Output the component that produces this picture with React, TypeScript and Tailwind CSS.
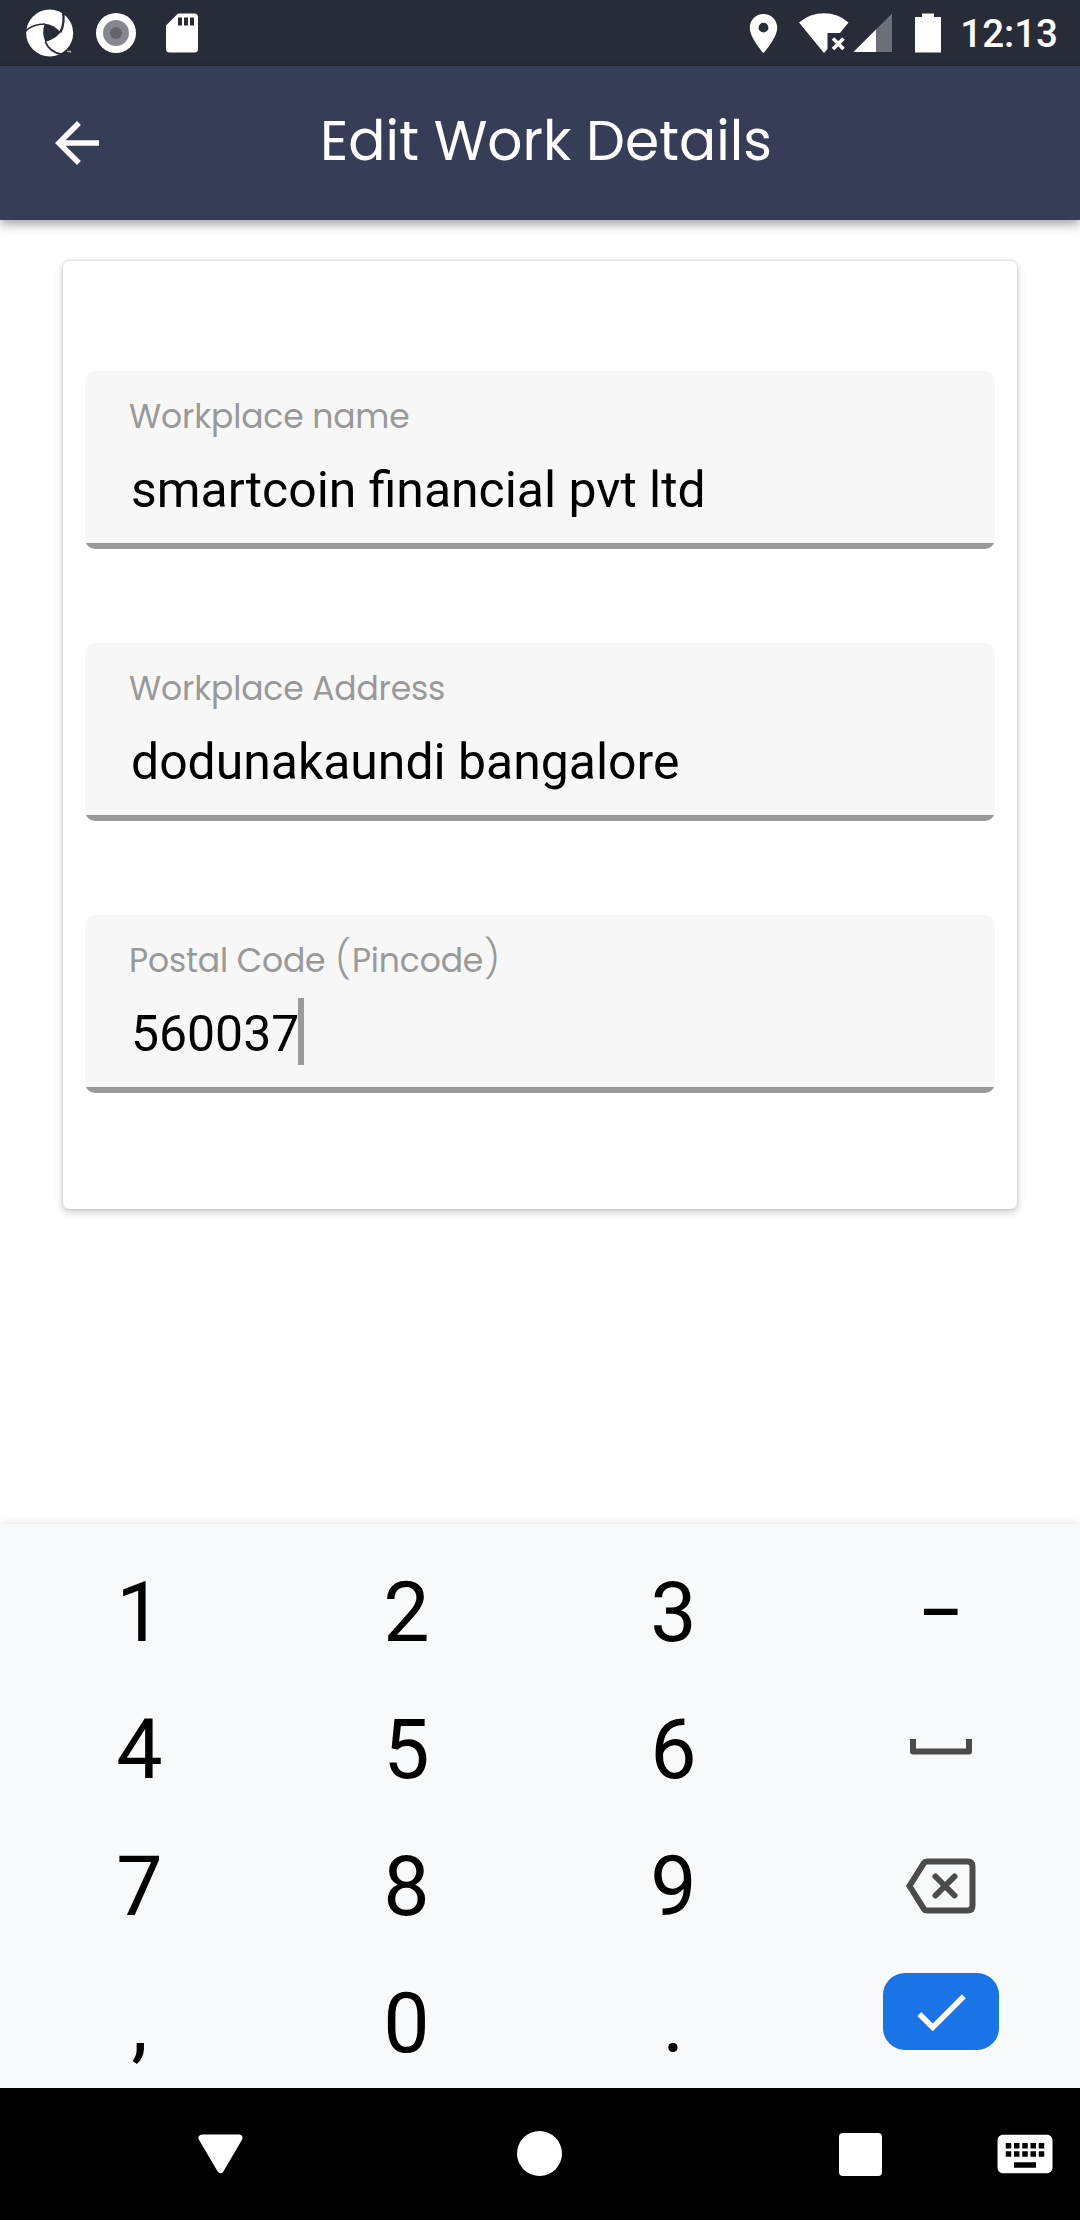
import React from "react";
import { MdArrowBack, MdCheck, MdKeyboard, MdPlace } from "react-icons/md";

const geometric =
  "font-['Poppins','Inter',sans-serif] [font-feature-settings:'cv11']";

function PinwheelIcon() {
  return (
    <svg className="h-12 w-12" viewBox="78 28 144 144" fill="none">
      <circle cx="149" cy="100" r="70.5" fill="#fff" />
      <g stroke="#282c38" fill="none">
        <path d="M76 95Q98 73 135 73" strokeWidth="5" />
        <path d="M181 98Q196 70 188 30" strokeWidth="7" />
        <path d="M136 126Q148 158 186 164" strokeWidth="5" />
      </g>
      <path d="M134 72Q162 74 182 98Q164 120 136 127Q124 99 134 72Z" fill="#282c38" />
      <path d="M172 168Q182 162 190 158L222 150v24h-50z" fill="#282c38" />
      <path d="M201 153h12v6h-3v-3h-2v3h-2v-3h-5z" fill="#b9bbc0" />
    </svg>
  );
}

function TargetIcon() {
  return (
    <svg className="h-10 w-10" viewBox="0 0 40 40">
      <circle cx="20" cy="20" r="20" fill="#fff" />
      <circle cx="20" cy="20" r="13" fill="#85888f" />
      <circle cx="20" cy="20" r="6" fill="#62656d" />
    </svg>
  );
}

function SdCardIcon() {
  return (
    <svg className="h-10 w-8" viewBox="0 0 32 40">
      <path d="M12 .5H28.500a3.500 3.500 0 0 1 3.500 3.500V36a3.500 3.500 0 0 1-3.500 3.500H3.500A3.500 3.500 0 0 1 0 36V12.500Z" fill="#fff" />
      <path d="M12 4.500h4v8h-4zM18 4.500h4v8h-4zM24 4.500h4v8h-4z" fill="#282c38" />
    </svg>
  );
}

function WifiOffIcon() {
  return (
    <svg className="h-10 w-[50px]" viewBox="0 0 50 40">
      <path d="M0 9.500Q11 .3 25 .3T49.500 9.500L41 20H28.500V36L25 40Z" fill="#fff" />
      <path d="M34 25.500L44.500 36M44.500 25.500L34 36" stroke="#fff" strokeWidth="3.600" />
    </svg>
  );
}

function SignalIcon() {
  return (
    <svg className="h-10 w-10" viewBox="0 0 40 40">
      <path d="M.5 39L39 .5V39Z" fill="#6d7079" />
      <path d="M.5 39L23 16.500V39Z" fill="#fff" />
    </svg>
  );
}

function StatusBar() {
  return (
    <header className="flex h-[66px] shrink-0 items-center justify-between bg-[#282c38] pl-[26px] pr-[22px] text-white">
      <div className="flex items-center">
        <PinwheelIcon />
        <div className="ml-[22px]">
          <TargetIcon />
        </div>
        <div className="ml-[30px]">
          <SdCardIcon />
        </div>
      </div>
      <div className="flex items-center">
        <MdPlace className="size-[47px]" />
        <div className="ml-[12px]">
          <WifiOffIcon />
        </div>
        <div className="ml-[4px]">
          <SignalIcon />
        </div>
        <svg className="ml-[22px] h-10 w-[26px]" viewBox="0 0 26 40">
          <path d="M7 .5H19V4H26V39.500H0V4H7Z" fill="#fff" />
        </svg>
        <span className="ml-[19px] mt-[3px] font-['Roboto',sans-serif] text-[38.5px] font-medium leading-none">
          12:13
        </span>
      </div>
    </header>
  );
}

function AppBar() {
  return (
    <div className="relative flex h-[154px] shrink-0 items-center bg-[#363d56] pl-[44px] text-white shadow-[0_4px_10px_rgba(0,0,0,0.38)]">
      <MdArrowBack className="size-[66px]" />
      <h1 className={`${geometric} ml-[210px] -mt-[6px] whitespace-nowrap text-[55px] font-normal leading-none`}>
        Edit Work Details
      </h1>
    </div>
  );
}

function Paren({ children }: { children: string }) {
  return <span className="mx-[1px] text-[38px] font-light leading-[0]">{children}</span>;
}

function Field({ label, value, focused }: { label: React.ReactNode; value: string; focused?: boolean }) {
  return (
    <div className="flex h-[178px] flex-col justify-between overflow-hidden rounded-[10px] bg-[#f7f7f7]">
      <div className="pl-[44px] pt-[28px]">
        <div className={`${geometric} h-[36px] whitespace-nowrap text-[33px] font-normal leading-[36px] tracking-[-0.15px] text-[#999999]`}>
          {label}
        </div>
        <div className="ml-[2px] mt-[19px] flex h-[67px] items-center font-['Roboto',sans-serif] text-[49.9px] text-black">
          <span className="whitespace-nowrap pt-[5px] leading-[62px]">{value}</span>
          {focused && <span className="-ml-px h-[67px] w-[6px] bg-[#9a9a9a]" />}
        </div>
      </div>
      <div className="h-[6px] bg-[#9a9a9a]" />
    </div>
  );
}

function SpaceIcon() {
  return (
    <svg className="h-[18px] w-[62px]" viewBox="0 0 62 18">
      <path d="M3 0V12.500H59V0" fill="none" stroke="#4b4b4b" strokeWidth="6" strokeLinejoin="round" />
    </svg>
  );
}

function BackspaceIcon() {
  return (
    <svg className="mt-[2px] h-[56px] w-[70px]" viewBox="0 0 70 56" fill="none" stroke="#4b4b4b" strokeWidth="6">
      <path d="M21 3.500H61.500Q66.500 3.500 66.500 8.500V47.500Q66.500 52.500 61.500 52.500H21Q19 52.500 18 51L3.500 28L18 5Q19 3.500 21 3.500Z" />
      <path d="M29.500 18.500L48.500 37.500M48.500 18.500L29.500 37.500" strokeLinecap="round" />
    </svg>
  );
}

function EnterKey() {
  return (
    <div className="-mt-[20px] flex h-[77px] w-[116px] items-center justify-center rounded-[22px] bg-[#1b73e8] text-white">
      <MdCheck className="size-[66px]" />
    </div>
  );
}

const keys: React.ReactNode[] = [
  "1", "2", "3", "−",
  "4", "5", "6", <SpaceIcon />,
  "7", "8", "9", <BackspaceIcon />,
  ",", "0", ".", <EnterKey />,
];

function Keypad() {
  return (
    <section className="relative grid h-[564px] shrink-0 grid-cols-4 grid-rows-[repeat(4,137px)] bg-[#f8f9fb] px-[6px] pt-[18px] font-['Roboto',sans-serif] text-[82.5px] leading-none text-black shadow-[0_0_8px_rgba(0,0,0,0.12)]">
      {keys.map((key, i) => (
        <div key={i} className="flex items-center justify-center">
          {typeof key === "string" ? <span className="pt-[5px]">{key}</span> : key}
        </div>
      ))}
    </section>
  );
}

function NavBar() {
  return (
    <nav className="relative flex h-[132px] shrink-0 items-center bg-black text-white">
      <svg className="ml-[198px] h-[40px] w-[45px]" viewBox="0 0 45 40">
        <path d="M4 4H41L22.500 35.500Z" fill="#fff" stroke="#fff" strokeWidth="7" strokeLinejoin="round" />
      </svg>
      <div className="-mt-px ml-[274px] size-[45px] rounded-full bg-white" />
      <div className="ml-[277px] size-[43px] rounded-[4px] bg-white" />
      <MdKeyboard className="-mt-px ml-[110px] size-[66px]" />
    </nav>
  );
}

export default function App() {
  return (
    <div className="flex h-[2220px] w-[1080px] flex-col overflow-hidden bg-white">
      <StatusBar />
      <AppBar />
      <main className="min-h-0 flex-1 px-[63px] pt-[41px]">
        <div className="flex h-[948px] flex-col gap-[94px] rounded-[6px] bg-white px-[22px] pt-[110px] shadow-[0_3px_8px_rgba(0,0,0,0.22),0_0_3px_rgba(0,0,0,0.16)]">
          <Field label="Workplace name" value="smartcoin financial pvt ltd" />
          <Field label="Workplace Address" value="dodunakaundi bangalore" />
          <Field
            label={<>Postal Code <Paren>(</Paren>Pincode<Paren>)</Paren></>}
            value="560037"
            focused
          />
        </div>
      </main>
      <Keypad />
      <NavBar />
    </div>
  );
}
